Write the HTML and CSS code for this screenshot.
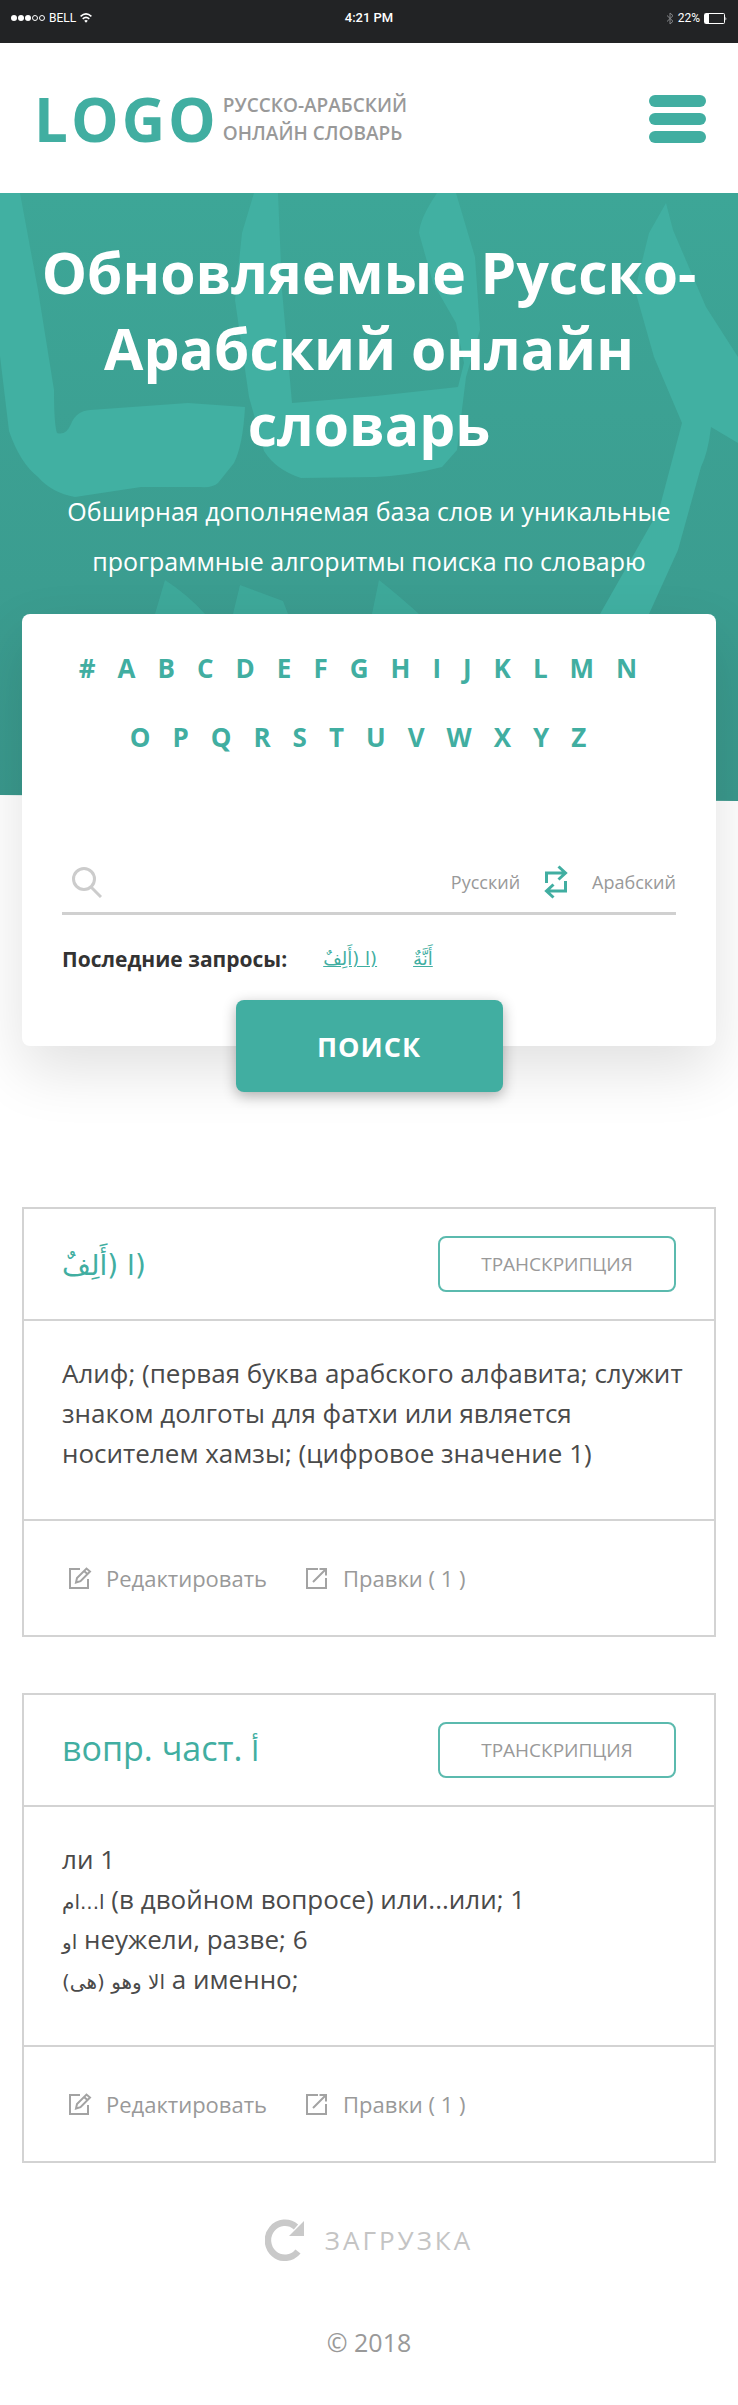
FILE: index.html
```html
<!DOCTYPE html>
<html lang="ru">
<head>
<meta charset="utf-8">
<meta name="viewport" content="width=device-width, initial-scale=1">
<title>Русско-Арабский онлайн словарь</title>
<link rel="stylesheet" href="styles.css">
</head>
<body>
<div class="status">
  <div class="status-side">
    <svg width="34" height="10" viewBox="0 0 34 10" aria-hidden="true"><g fill="#fff"><circle cx="3" cy="5" r="3"/><circle cx="10" cy="5" r="3"/><circle cx="17" cy="5" r="3"/></g><g fill="none" stroke="#fff"><circle cx="24" cy="5" r="2.5"/><circle cx="31" cy="5" r="2.5"/></g></svg>
    <span>BELL</span>
    <svg width="12" height="10" viewBox="0 0 12 10" fill="none" stroke="#fff" stroke-width="1.5" aria-hidden="true"><path d="M.6 3.4Q6-1.600 11.400 3.400M2.700 5.900Q6 2.900 9.300 5.900"/><path d="M6 9.800 4.200 7.700Q6 6.500 7.800 7.700Z" fill="#fff" stroke="none"/></svg>
  </div>
  <div class="status-time">4:21 PM</div>
  <div class="status-side status-right">
    <svg width="8" height="13" viewBox="0 0 8 13" fill="none" stroke="#85878a" aria-hidden="true"><path d="M1 3.500 7 9.300 4 12V1l3 2.700L1 9.500"/></svg>
    <span>22%</span>
    <svg width="23" height="11" viewBox="0 0 23 11" aria-hidden="true"><rect x=".5" y=".5" width="20" height="10" rx="1" fill="none" stroke="#fff"/><path d="M1 1h4v9H1zM21.500 3.500q1.500 2 0 4z" fill="#fff"/></svg>
  </div>
</div>
<header class="header">
  <a class="brand" href="#">
    <span class="logo">LOGO</span>
    <span class="tagline">РУССКО-АРАБСКИЙ<br>ОНЛАЙН СЛОВАРЬ</span>
  </a>
  <button class="burger" type="button" aria-label="Меню"><span></span><span></span><span></span></button>
</header>
<main>
  <section class="hero">
    <svg class="hero-art" viewBox="0 0 738 608" preserveAspectRatio="xMidYMin slice" aria-hidden="true">
      <g fill="#41b0a2">
        <path d="M0 0H20L38 97 54 197Q54 232 57 240 66 243 71 231 76 218 90 217L188 210 245 214Q243 252 234 270L218 290Q213 295 200 294L141 294 75 304Q52 300 38 284 20 270 9 238L0 163Z"/>
        <path d="M254 0H278L282 97 292 210 376 203 458 194 464 170 456 130 433 90 419 40Q420 25 437 0H456L475 64 480 137 466 184 457 257 442 274Q412 282 376 284L301 285Q276 277 264 258L249 204 235 107 242 40Z"/>
        <path d="M666 10 673 37 706 114 738 164V250L711 234Q708 260 701 274L678 357 649 421H600L659 317 682 230 654 164 635 97 649 40Z"/>
        <path d="M155 421 165 387Q188 402 205 421ZM233 421 240 392 283 408 288 421ZM372 421 379 387Q398 402 419 421Z" opacity=".6"/>
      </g>
    </svg>
    <h1>Обновляемые Русско-<br>Арабский онлайн<br>словарь</h1>
    <p class="lead">Обширная дополняемая база слов и уникальные<br>программные алгоритмы поиска по словарю</p>
  </section>
  <form class="search" action="#">
    <nav class="letters" aria-label="Алфавит">
      <a href="#">#</a><a href="#">A</a><a href="#">B</a><a href="#">C</a><a href="#">D</a><a href="#">E</a><a href="#">F</a><a href="#">G</a><a href="#">H</a><a href="#">I</a><a href="#">J</a><a href="#">K</a><a href="#">L</a><a href="#">M</a><a href="#">N</a><a href="#">O</a><a href="#">P</a><a href="#">Q</a><a href="#">R</a><a href="#">S</a><a href="#">T</a><a href="#">U</a><a href="#">V</a><a href="#">W</a><a href="#">X</a><a href="#">Y</a><a href="#">Z</a>
    </nav>
    <div class="field">
      <svg viewBox="0 0 30 32" width="30" height="32" fill="none" stroke="#ccc" stroke-width="3" aria-hidden="true"><circle cx="12" cy="13" r="10.500"/><path d="M19 21 29 31"/></svg>
      <input type="search" aria-label="Слово для поиска">
      <span class="lang">Русский</span>
      <button class="swap" type="button" aria-label="Поменять языки"><svg viewBox="0 0 24 34" width="24" height="34" fill="none" stroke="#41aea1" stroke-width="3" aria-hidden="true"><path d="M2.500 18V8H21M14.500 1.500 21.500 8 14.500 14.500M21.500 16V26H3M9.500 19.500 2.500 26 9.500 32.500"/></svg></button>
      <span class="lang">Арабский</span>
    </div>
    <div class="recent">
      <strong>Последние запросы:</strong>
      <a href="#" lang="ar" dir="rtl">(ا (أَلِفٌ</a>
      <a href="#" lang="ar" dir="rtl">أَنَّةٌ</a>
    </div>
    <button class="submit" type="submit">ПОИСК</button>
  </form>
  <div class="results">
    <article class="entry">
      <div class="entry-head">
        <h2><bdi lang="ar" dir="rtl">(ا (أَلِفٌ</bdi></h2>
        <button class="outline" type="button">ТРАНСКРИПЦИЯ</button>
      </div>
      <div class="entry-body">
        <p>Алиф; (первая буква арабского алфавита; служит<br>знаком долготы для фатхи или является<br>носителем хамзы; (цифровое значение 1)</p>
      </div>
      <div class="entry-foot">
        <a href="#"><svg viewBox="0 0 24 24" width="24" height="24" fill="none" stroke="#a3a3a3" stroke-width="2" aria-hidden="true"><path d="M12 3H2V22H20V13"/><path d="M8 16.500 9 12 18.500 2.500 22 5.500 12.500 15.200ZM16 5 19.500 8"/></svg>Редактировать</a>
        <a href="#"><svg viewBox="0 0 24 24" width="24" height="24" fill="none" stroke="#a3a3a3" stroke-width="2" aria-hidden="true"><path d="M13 3H2V22H21V12M8 16 20.500 3.500M14.500 3H21V9.500"/></svg>Правки ( 1 )</a>
      </div>
    </article>
    <article class="entry">
      <div class="entry-head">
        <h2>вопр. част. <bdi lang="ar" dir="rtl">أ</bdi></h2>
        <button class="outline" type="button">ТРАНСКРИПЦИЯ</button>
      </div>
      <div class="entry-body">
        <p>ли 1<br><bdi lang="ar" dir="rtl">ا...ام</bdi> (в двойном вопросе) или...или; 1<br><bdi lang="ar" dir="rtl">او</bdi> неужели, разве; 6<br><bdi lang="ar" dir="rtl">الا وهو (هى)</bdi> а именно;</p>
      </div>
      <div class="entry-foot">
        <a href="#"><svg viewBox="0 0 24 24" width="24" height="24" fill="none" stroke="#a3a3a3" stroke-width="2" aria-hidden="true"><path d="M12 3H2V22H20V13"/><path d="M8 16.500 9 12 18.500 2.500 22 5.500 12.500 15.200ZM16 5 19.500 8"/></svg>Редактировать</a>
        <a href="#"><svg viewBox="0 0 24 24" width="24" height="24" fill="none" stroke="#a3a3a3" stroke-width="2" aria-hidden="true"><path d="M13 3H2V22H21V12M8 16 20.500 3.500M14.500 3H21V9.500"/></svg>Правки ( 1 )</a>
      </div>
    </article>
  </div>
  <div class="loading" role="status">
    <svg viewBox="0 0 40 42" width="40" height="42" aria-hidden="true"><path d="M33 32.500A17 17.500 0 1 1 31 8" fill="none" stroke="#c9c9c9" stroke-width="6.500"/><path d="M39 2V17H24Z" fill="#c9c9c9"/></svg>
    <span>ЗАГРУЗКА</span>
  </div>
</main>
<footer class="footer">© 2018</footer>
</body>
</html>
```
FILE: styles.css
```css
* { box-sizing: border-box; }
body {
  margin: 0;
  background: #fff;
  color: #4a4a4a;
  font-family: "Open Sans", "DejaVu Sans", sans-serif;
}
a { color: inherit; text-decoration: none; }
button { font: inherit; cursor: pointer; }
svg { display: block; flex: none; }
bdi, [lang="ar"] { font-family: "DejaVu Sans", sans-serif; }

.status {
  display: flex;
  align-items: flex-start;
  height: 43px;
  padding: 10px 11px 0;
  background: #222325;
  color: #fff;
  font: 12px/16px Roboto, sans-serif;
}
.status-side { flex: 1; display: flex; align-items: center; gap: 4px; }
.status-right { justify-content: flex-end; }
.status-time { font-weight: 500; font-size: 13px; }

.header {
  display: flex;
  justify-content: space-between;
  align-items: center;
  height: 150px;
  padding: 2px 32px 0 34px;
}
.brand { display: flex; align-items: center; gap: 4px; }
.logo {
  color: #41aea1;
  font-size: 60px;
  font-weight: 700;
  line-height: 72px;
  letter-spacing: 3px;
}
.tagline { color: #999; font-size: 19px; font-weight: 600; line-height: 28px; }
.burger {
  display: grid;
  gap: 6px;
  width: 57px;
  padding: 0;
  border: 0;
  background: none;
}
.burger span { height: 12px; border-radius: 6px; background: #41aea1; }

.hero {
  position: relative;
  padding: 41px 16px 215px;
  background: linear-gradient(#3da697, #3a988c);
  clip-path: polygon(0 0, 100% 0, 100% 100%, 0 calc(100% - 6px));
  color: #fff;
  text-align: center;
}
.hero-art { position: absolute; inset: 0; width: 100%; height: 100%; }
.hero h1 {
  position: relative;
  margin: 0;
  font-size: 57px;
  font-weight: 700;
  line-height: 76px;
}
.lead { position: relative; margin: 24px 0 0; font-size: 25px; line-height: 50px; }

.search {
  position: relative;
  display: flex;
  flex-direction: column;
  margin: -187px 22px 0;
  padding: 20px 40px 0;
  border-radius: 8px;
  background: #fff;
  box-shadow: 0 24px 60px rgba(0, 0, 0, .12);
}
.letters {
  display: flex;
  flex-wrap: wrap;
  justify-content: center;
  color: #41aea1;
  font-size: 26px;
  font-weight: 700;
  line-height: 69px;
}
.letters a { margin-right: 22px; }
.field {
  display: flex;
  align-items: center;
  height: 64px;
  margin-top: 79px;
  padding-left: 10px;
  border-bottom: 3px solid #d0d0d0;
}
.field input { flex: 1; min-width: 0; border: 0; outline: 0; background: none; font-size: 24px; }
.lang { color: #999; font-size: 18px; }
.swap { margin: 0 24px; padding: 0; border: 0; background: none; }
.recent { display: flex; align-items: center; gap: 36px; margin-top: 20px; line-height: 48px; color: #333; font-size: 21px; }
.recent a { color: #41aea1; text-decoration: underline; font-size: 18px; }
.submit {
  align-self: center;
  width: 267px;
  height: 92px;
  margin: 17px 0 -46px;
  border: 0;
  border-radius: 8px;
  background: #41aea1;
  box-shadow: 0 4px 14px rgba(0, 0, 0, .3);
  color: #fff;
  font-size: 27px;
  font-weight: 700;
  letter-spacing: 1px;
}

.results { display: grid; gap: 56px; margin: 161px 22px 0; }
.entry { border: 2px solid #d3d3d3; }
.entry-head {
  display: flex;
  justify-content: space-between;
  align-items: center;
  height: 112px;
  padding: 0 38px;
  border-bottom: 2px solid #d3d3d3;
}
.entry h2 { margin: 0; color: #41aea1; font-size: 34px; font-weight: 400; line-height: 48px; }
.entry h2 bdi { font-size: 28px; }
.outline {
  width: 238px;
  height: 56px;
  border: 2px solid #5bbaae;
  border-radius: 8px;
  background: none;
  color: #999;
  font-size: 19px;
}
.entry-body { padding: 32px 0 46px 38px; border-bottom: 2px solid #d3d3d3; font-size: 26px; }
.entry-body p { margin: 0; line-height: 40px; }
.entry-body bdi { font-size: 20px; line-height: 1; }
.entry-foot {
  display: flex;
  align-items: center;
  gap: 38px;
  height: 114px;
  padding: 0 44px;
  color: #999;
  font-size: 22px;
}
.entry-foot a { display: flex; align-items: center; gap: 14px; }

.loading {
  display: flex;
  justify-content: center;
  align-items: center;
  gap: 20px;
  margin-top: 56px;
  color: #c4c4c4;
  font-size: 26px;
  line-height: 42px;
  letter-spacing: 3px;
}
.footer { padding: 61px 0 40px; color: #999; text-align: center; font-size: 25px; line-height: 40px; }
```
